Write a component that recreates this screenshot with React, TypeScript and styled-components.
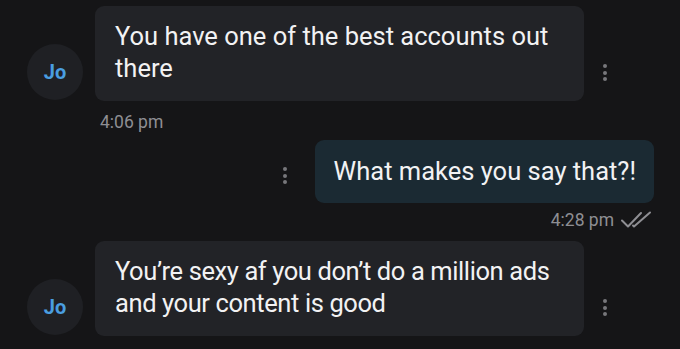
import styled, { createGlobalStyle } from "styled-components";

const GlobalStyle = createGlobalStyle`
  html, body {
    margin: 0;
    padding: 0;
    background: #151517;
    font-family: Roboto, "Liberation Sans", sans-serif;
  }
`;

type Msg = { kind: "in" | "out"; text: string; time: string; tight?: boolean };

const messages: Msg[] = [
  { kind: "in", text: "You have one of the best accounts out\nthere", time: "4:06 pm" },
  { kind: "out", text: "What makes you say that?!", time: "4:28 pm" },
  { kind: "in", text: "You’re sexy af you don’t do a million ads\nand your content is good", time: "", tight: true },
];

export default function App() {
  return (
    <>
      <GlobalStyle />
      <Thread>
        {messages.map((m, i) =>
          m.kind === "in" ? (
            <Group key={i}>
              <InRow>
                <Avatar>Jo</Avatar>
                <Bubble $out={false} $tight={!!m.tight}>{m.text}</Bubble>
                <Dots $side="in">
                  <span />
                  <span />
                  <span />
                </Dots>
              </InRow>
              {m.time && <Time $out={false}>{m.time}</Time>}
            </Group>
          ) : (
            <Group key={i}>
              <OutRow>
                <Dots $side="out">
                  <span />
                  <span />
                  <span />
                </Dots>
                <Bubble $out $tight={false}>{m.text}</Bubble>
              </OutRow>
              <Time $out>
                {m.time}
                <DoubleCheck />
              </Time>
            </Group>
          )
        )}
      </Thread>
    </>
  );
}

function DoubleCheck() {
  return (
    <svg width="31" height="18" viewBox="0 0 31 18" fill="none">
      <path d="M1 9.5 L7 15.5 L20 2" stroke="#8e8e93" strokeWidth="2" strokeLinecap="round" strokeLinejoin="round" />
      <path d="M12 14.5 L13 15.5 L29 1.5" stroke="#8e8e93" strokeWidth="2" strokeLinecap="round" strokeLinejoin="round" />
    </svg>
  );
}

const Thread = styled.div`
  width: 680px;
  height: 349px;
  overflow: hidden;
  padding-top: 6px;
  box-sizing: border-box;
  display: flex;
  flex-direction: column;
`;

const Group = styled.div`
  display: flex;
  flex-direction: column;
`;

const InRow = styled.div`
  display: flex;
  align-items: flex-end;
`;

const OutRow = styled.div`
  display: flex;
  align-items: center;
  justify-content: flex-end;
  padding-right: 26px;
`;

const Avatar = styled.div`
  width: 56px;
  height: 56px;
  margin: 0 12px 1px 27px;
  border-radius: 50%;
  background: #1f2024;
  color: #4a9ee0;
  font-weight: 700;
  font-size: 20px;
  display: flex;
  align-items: center;
  justify-content: center;
`;

const Bubble = styled.div<{ $out: boolean; $tight: boolean }>`
  box-sizing: border-box;
  width: ${(p) => (p.$out ? "auto" : "489px")};
  padding: ${(p) => (p.$out ? "15px 18px 16px 19px" : "14px 20px 17px")};
  border-radius: 9px;
  background: ${(p) => (p.$out ? "#1b2a33" : "#222327")};
  color: #f2f2f3;
  font-size: 25.5px;
  line-height: 32px;
  letter-spacing: ${(p) => (p.$tight ? "-0.4px" : "0")};
  white-space: pre;
`;

const Dots = styled.div<{ $side: "in" | "out" }>`
  display: flex;
  flex-direction: column;
  gap: 2.5px;
  margin: ${(p) => (p.$side === "in" ? "0 0 20px 19px" : "8px 28px 0 0")};
  span {
    width: 4px;
    height: 4px;
    border-radius: 50%;
    background: #77777b;
  }
`;

const Time = styled.div<{ $out: boolean }>`
  display: flex;
  align-items: center;
  gap: 7px;
  align-self: ${(p) => (p.$out ? "flex-end" : "flex-start")};
  margin: ${(p) => (p.$out ? "7px 28px 11px 0" : "11px 0 8px 100px")};
  color: #8e8e93;
  font-size: 17.5px;
  line-height: 20px;
`;
